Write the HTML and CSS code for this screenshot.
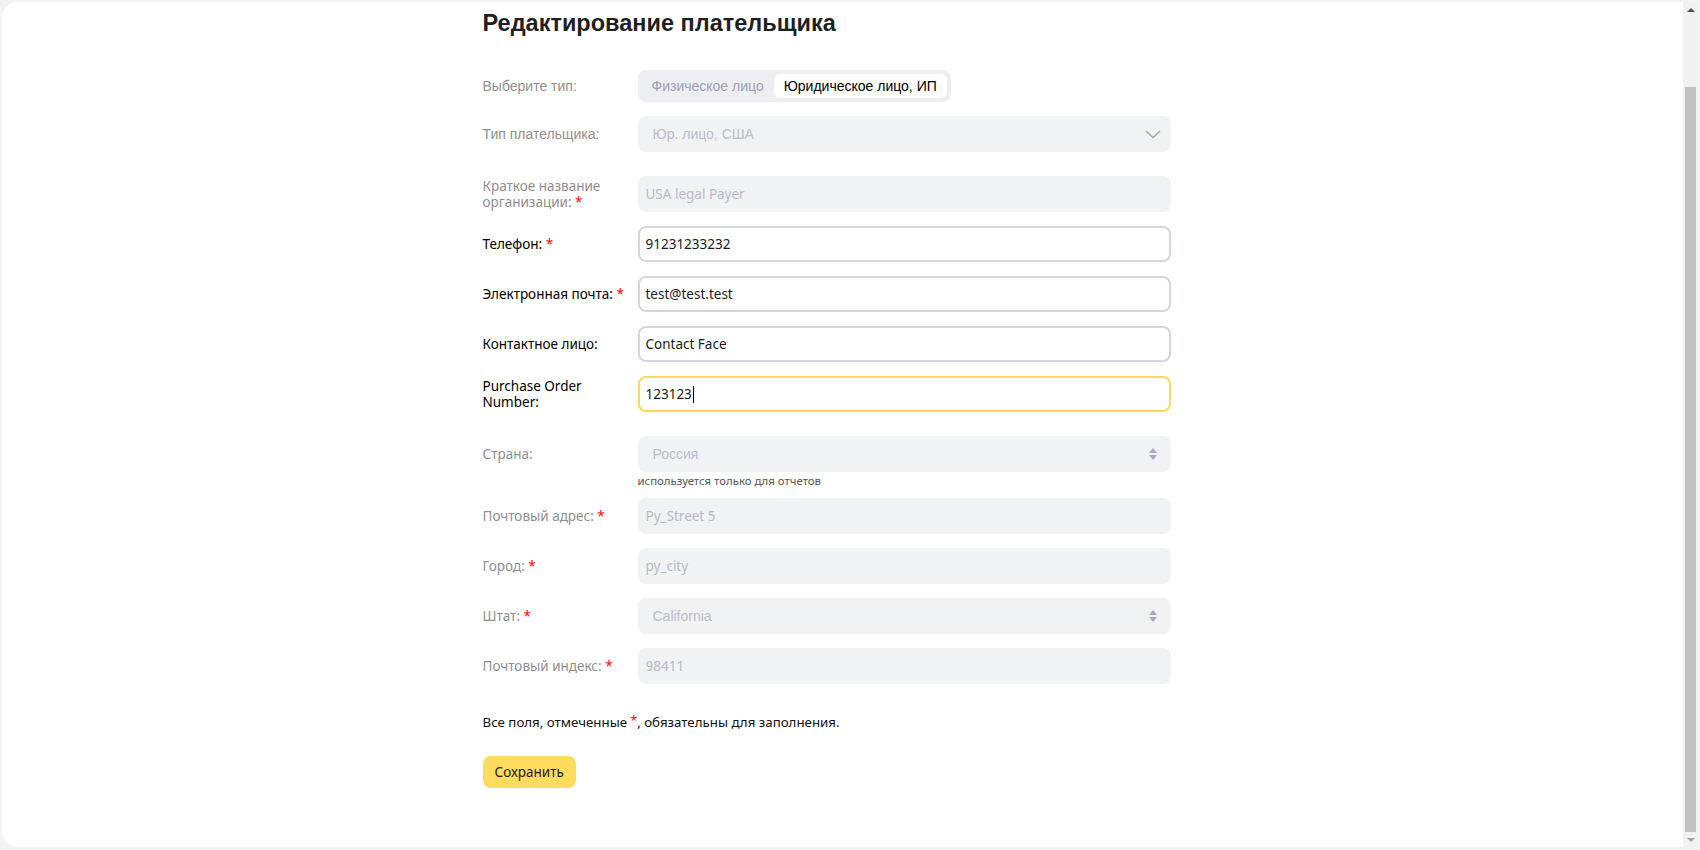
FILE: index.html
```html
<!DOCTYPE html>
<html lang="ru">
<head>
<meta charset="utf-8">
<title>Редактирование плательщика</title>
<link rel="stylesheet" href="styles.css">
</head>
<body>
<div class="frame">
  <main class="card">
    <div class="card__body">
      <div class="container">
        <h1 class="title">Редактирование плательщика</h1>
        <form class="form">
          <div class="group">
            <div class="row">
              <div class="label label--muted label--arial">Выберите тип:</div>
              <div class="segment">
                <span class="segment__item">Физическое лицо</span>
                <span class="segment__item segment__item--active">Юридическое лицо, ИП</span>
              </div>
            </div>
            <div class="row">
              <div class="label label--muted label--arial">Тип плательщика:</div>
              <div class="field field--disabled select select--chevron">
                <span class="select__text">Юр. лицо, США</span>
                <svg class="chevron" width="16" height="9" viewBox="0 0 16 9"><path d="M1 1l7 6.5L15 1" fill="none" stroke="#a3a8ba" stroke-width="1.6"/></svg>
              </div>
            </div>
          </div>

          <div class="group">
            <div class="row">
              <div class="label label--muted">Краткое название<br>организации: <span class="req">*</span></div>
              <div class="field field--disabled">USA legal Payer</div>
            </div>
            <div class="row">
              <div class="label">Телефон: <span class="req">*</span></div>
              <div class="field">91231233232</div>
            </div>
            <div class="row">
              <div class="label">Электронная почта: <span class="req">*</span></div>
              <div class="field">test@test.test</div>
            </div>
            <div class="row">
              <div class="label">Контактное лицо:</div>
              <div class="field">Contact Face</div>
            </div>
            <div class="row">
              <div class="label">Purchase Order<br>Number:</div>
              <div class="field field--focused">123123<span class="caret"></span></div>
            </div>
          </div>

          <div class="group">
            <div class="row row--top">
              <div class="label label--muted">Страна:</div>
              <div class="control">
                <div class="field field--disabled select select--stack">
                  <span class="select__text">Россия</span>
                  <svg class="updown" width="8" height="14" viewBox="0 0 8 14"><path d="M0 6L4 1L8 6Z M0 8L4 13L8 8Z" fill="#a6abbd"/></svg>
                </div>
                <div class="hint">используется только для отчетов</div>
              </div>
            </div>
            <div class="row">
              <div class="label label--muted">Почтовый адрес: <span class="req">*</span></div>
              <div class="field field--disabled">Py_Street 5</div>
            </div>
            <div class="row">
              <div class="label label--muted">Город: <span class="req">*</span></div>
              <div class="field field--disabled">py_city</div>
            </div>
            <div class="row">
              <div class="label label--muted">Штат: <span class="req">*</span></div>
              <div class="field field--disabled select select--stack">
                <span class="select__text">California</span>
                <svg class="updown" width="8" height="14" viewBox="0 0 8 14"><path d="M0 6L4 1L8 6Z M0 8L4 13L8 8Z" fill="#a6abbd"/></svg>
              </div>
            </div>
            <div class="row">
              <div class="label label--muted">Почтовый индекс: <span class="req">*</span></div>
              <div class="field field--disabled">98411</div>
            </div>
          </div>
        </form>
        <p class="note">Все поля, отмеченные <span class="req req--sup">*</span>, обязательны для заполнения.</p>
        <button class="save" type="button">Сохранить</button>
      </div>
    </div>
    <div class="scrollbar" aria-hidden="true">
      <div class="scrollbar__btn">
        <svg width="8" height="4" viewBox="0 0 8 4"><path d="M0 4L4 0L8 4Z" fill="#505050"/></svg>
      </div>
      <div class="scrollbar__track"><div class="scrollbar__thumb"></div></div>
      <div class="scrollbar__btn">
        <svg width="8" height="4" viewBox="0 0 8 4"><path d="M0 0L4 4L8 0Z" fill="#a3a3a3"/></svg>
      </div>
    </div>
  </main>
</div>
</body>
</html>
```

FILE: styles.css
```css
html, body {
  margin: 0;
  padding: 0;
}

body {
  background: #f2f3f5;
  font-family: "Noto Sans", "Liberation Sans", Arial, sans-serif;
  color: #000;
}

.frame {
  height: 850px;
  box-sizing: border-box;
  padding: 2px 2px 3px 2px;
}

.card {
  height: 845px;
  display: flex;
  background: #fff;
  border-radius: 16px 0 0 16px;
  overflow: hidden;
}

.card__body {
  flex: 1;
  min-width: 0;
  overflow: hidden;
}

.container {
  width: 720px;
  margin: 0 auto;
  padding: 5px 0 60px;
}

/* scrollbar (scrolled to the end) */
.scrollbar {
  width: 15px;
  flex: none;
  display: flex;
  flex-direction: column;
  background: #f1f1f1;
}

.scrollbar__btn {
  height: 15px;
  flex: none;
  display: flex;
  align-items: center;
  justify-content: center;
}

.scrollbar__btn svg {
  display: block;
}

.scrollbar__track {
  flex: 1;
  display: flex;
  padding: 70px 2px 0;
}

.scrollbar__thumb {
  flex: 1;
  background: #c1c1c1;
}

.title {
  margin: 0;
  font: 700 23.5px/32px "Liberation Sans", Arial, sans-serif;
  color: #1f1f1f;
}

.form {
  margin-top: 31px;
  display: flex;
  flex-direction: column;
  gap: 24px;
}

.group {
  display: flex;
  flex-direction: column;
  gap: 14px;
}

.row {
  display: flex;
  align-items: center;
}

.row--top {
  align-items: flex-start;
}

.label {
  width: 155px;
  flex: none;
  font-size: 13.5px;
  line-height: 16px;
  white-space: nowrap;
  color: #000;
}

.row--top .label {
  height: 36px;
  display: flex;
  align-items: center;
}

.label--muted {
  color: #8f8f8f;
}

.label--arial {
  font-family: "Liberation Sans", Arial, sans-serif;
  font-size: 14px;
}

.req {
  color: #f00;
}

.req--sup {
  font-size: 12px;
  vertical-align: 2px;
}

.control {
  width: 533px;
}

.field {
  width: 533px;
  height: 36px;
  box-sizing: border-box;
  border: 2px solid #d3d6df;
  border-radius: 8px;
  padding: 0 6px;
  display: flex;
  align-items: center;
  font-size: 13.5px;
  color: #1a1a1a;
  background: #fff;
}

.field--disabled {
  background: #f1f2f4;
  border-color: #f1f2f4;
  color: #b6bac9;
}

.field--focused {
  border-color: #fdd85d;
}

.caret {
  display: inline-block;
  width: 1px;
  height: 17px;
  background: #000;
  margin-left: 1px;
}

.select {
  justify-content: space-between;
  padding-left: 13px;
  font-family: "Liberation Sans", Arial, sans-serif;
  font-size: 14px;
  color: #b9bdcb;
}

.select--chevron {
  padding-right: 8px;
}

.select--stack {
  padding-right: 12px;
}

.chevron,
.updown {
  display: block;
  flex: none;
}

.hint {
  margin: 3px 0 -3px;
  font-size: 11.4px;
  line-height: 12px;
  color: #555;
}

.segment {
  display: flex;
  height: 32px;
  box-sizing: border-box;
  padding: 4px;
  border-radius: 8px;
  background: #edeef1;
  font-family: "Liberation Sans", Arial, sans-serif;
  font-size: 14px;
}

.segment__item {
  display: flex;
  align-items: center;
  padding: 0 10px;
  border-radius: 6px;
  color: #9ba0b4;
}

.segment__item--active {
  background: #fff;
  color: #000;
}

.note {
  margin: 27px 0 0;
  font-size: 13.3px;
  line-height: 20px;
  color: #111;
}

.save {
  display: block;
  margin-top: 24px;
  height: 32px;
  padding: 0 12px;
  border: 0;
  border-radius: 8px;
  background: #ffdb5e;
  font-family: "Noto Sans", "Liberation Sans", Arial, sans-serif;
  font-size: 13.5px;
  color: #1a1a1a;
}
```
